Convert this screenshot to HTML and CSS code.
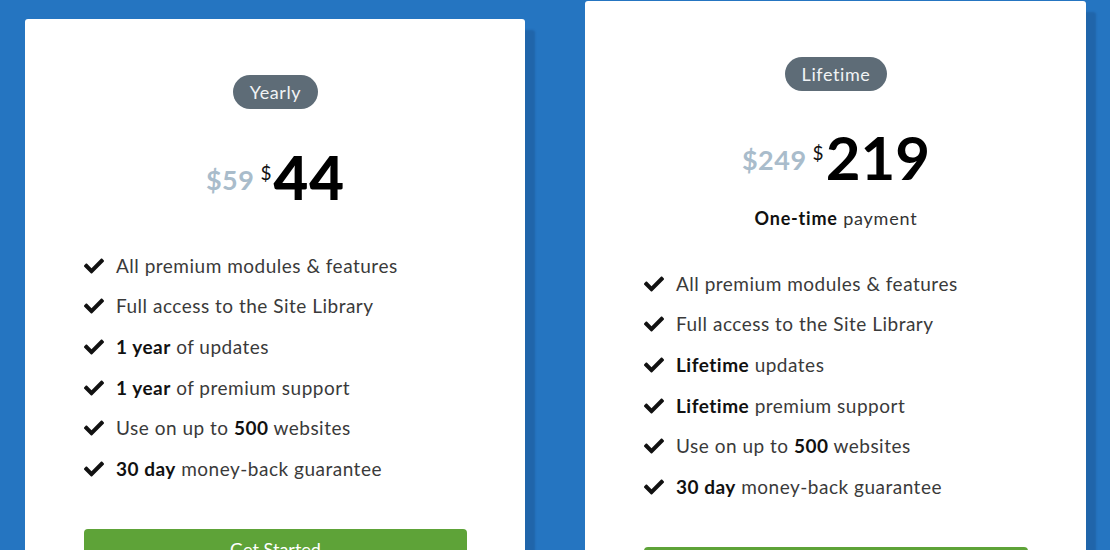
FILE: index.html
```html
<!DOCTYPE html>
<html lang="en">
<head>
<meta charset="utf-8">
<title>Pricing</title>
<link rel="stylesheet" href="styles.css">
</head>
<body>
<main class="plans">
  <section class="card card--yearly">
    <span class="badge">Yearly</span>
    <div class="price">
      <span class="price__old">$59</span>
      <span class="price__cur">$</span>
      <span class="price__num">44</span>
    </div>
    <ul class="features">
      <li><svg class="check" viewBox="0 0 512 512"><path d="M173.898 439.404l-166.4-166.4c-9.997-9.997-9.997-26.206 0-36.204l36.203-36.204c9.997-9.998 26.207-9.998 36.204 0L192 312.69 432.095 72.596c9.997-9.997 26.207-9.997 36.204 0l36.203 36.204c9.997 9.997 9.997 26.206 0 36.204l-294.4 294.401c-9.998 9.997-26.207 9.997-36.204-.001z"/></svg><span>All premium modules &amp; features</span></li>
      <li><svg class="check" viewBox="0 0 512 512"><path d="M173.898 439.404l-166.4-166.4c-9.997-9.997-9.997-26.206 0-36.204l36.203-36.204c9.997-9.998 26.207-9.998 36.204 0L192 312.69 432.095 72.596c9.997-9.997 26.207-9.997 36.204 0l36.203 36.204c9.997 9.997 9.997 26.206 0 36.204l-294.4 294.401c-9.998 9.997-26.207 9.997-36.204-.001z"/></svg><span>Full access to the Site Library</span></li>
      <li><svg class="check" viewBox="0 0 512 512"><path d="M173.898 439.404l-166.4-166.4c-9.997-9.997-9.997-26.206 0-36.204l36.203-36.204c9.997-9.998 26.207-9.998 36.204 0L192 312.69 432.095 72.596c9.997-9.997 26.207-9.997 36.204 0l36.203 36.204c9.997 9.997 9.997 26.206 0 36.204l-294.4 294.401c-9.998 9.997-26.207 9.997-36.204-.001z"/></svg><span><b>1 year</b> of updates</span></li>
      <li><svg class="check" viewBox="0 0 512 512"><path d="M173.898 439.404l-166.4-166.4c-9.997-9.997-9.997-26.206 0-36.204l36.203-36.204c9.997-9.998 26.207-9.998 36.204 0L192 312.69 432.095 72.596c9.997-9.997 26.207-9.997 36.204 0l36.203 36.204c9.997 9.997 9.997 26.206 0 36.204l-294.4 294.401c-9.998 9.997-26.207 9.997-36.204-.001z"/></svg><span><b>1 year</b> of premium support</span></li>
      <li><svg class="check" viewBox="0 0 512 512"><path d="M173.898 439.404l-166.4-166.4c-9.997-9.997-9.997-26.206 0-36.204l36.203-36.204c9.997-9.998 26.207-9.998 36.204 0L192 312.69 432.095 72.596c9.997-9.997 26.207-9.997 36.204 0l36.203 36.204c9.997 9.997 9.997 26.206 0 36.204l-294.4 294.401c-9.998 9.997-26.207 9.997-36.204-.001z"/></svg><span>Use on up to <b>500</b> websites</span></li>
      <li><svg class="check" viewBox="0 0 512 512"><path d="M173.898 439.404l-166.4-166.4c-9.997-9.997-9.997-26.206 0-36.204l36.203-36.204c9.997-9.998 26.207-9.998 36.204 0L192 312.69 432.095 72.596c9.997-9.997 26.207-9.997 36.204 0l36.203 36.204c9.997 9.997 9.997 26.206 0 36.204l-294.4 294.401c-9.998 9.997-26.207 9.997-36.204-.001z"/></svg><span><b>30 day</b> money-back guarantee</span></li>
    </ul>
    <a class="btn" href="#">Get Started</a>
  </section>

  <section class="card card--lifetime">
    <span class="badge">Lifetime</span>
    <div class="price">
      <span class="price__old">$249</span>
      <span class="price__cur">$</span>
      <span class="price__num">219</span>
    </div>
    <p class="payment"><b>One-time</b> payment</p>
    <ul class="features">
      <li><svg class="check" viewBox="0 0 512 512"><path d="M173.898 439.404l-166.4-166.4c-9.997-9.997-9.997-26.206 0-36.204l36.203-36.204c9.997-9.998 26.207-9.998 36.204 0L192 312.69 432.095 72.596c9.997-9.997 26.207-9.997 36.204 0l36.203 36.204c9.997 9.997 9.997 26.206 0 36.204l-294.4 294.401c-9.998 9.997-26.207 9.997-36.204-.001z"/></svg><span>All premium modules &amp; features</span></li>
      <li><svg class="check" viewBox="0 0 512 512"><path d="M173.898 439.404l-166.4-166.4c-9.997-9.997-9.997-26.206 0-36.204l36.203-36.204c9.997-9.998 26.207-9.998 36.204 0L192 312.69 432.095 72.596c9.997-9.997 26.207-9.997 36.204 0l36.203 36.204c9.997 9.997 9.997 26.206 0 36.204l-294.4 294.401c-9.998 9.997-26.207 9.997-36.204-.001z"/></svg><span>Full access to the Site Library</span></li>
      <li><svg class="check" viewBox="0 0 512 512"><path d="M173.898 439.404l-166.4-166.4c-9.997-9.997-9.997-26.206 0-36.204l36.203-36.204c9.997-9.998 26.207-9.998 36.204 0L192 312.69 432.095 72.596c9.997-9.997 26.207-9.997 36.204 0l36.203 36.204c9.997 9.997 9.997 26.206 0 36.204l-294.4 294.401c-9.998 9.997-26.207 9.997-36.204-.001z"/></svg><span><b>Lifetime</b> updates</span></li>
      <li><svg class="check" viewBox="0 0 512 512"><path d="M173.898 439.404l-166.4-166.4c-9.997-9.997-9.997-26.206 0-36.204l36.203-36.204c9.997-9.998 26.207-9.998 36.204 0L192 312.69 432.095 72.596c9.997-9.997 26.207-9.997 36.204 0l36.203 36.204c9.997 9.997 9.997 26.206 0 36.204l-294.4 294.401c-9.998 9.997-26.207 9.997-36.204-.001z"/></svg><span><b>Lifetime</b> premium support</span></li>
      <li><svg class="check" viewBox="0 0 512 512"><path d="M173.898 439.404l-166.4-166.4c-9.997-9.997-9.997-26.206 0-36.204l36.203-36.204c9.997-9.998 26.207-9.998 36.204 0L192 312.69 432.095 72.596c9.997-9.997 26.207-9.997 36.204 0l36.203 36.204c9.997 9.997 9.997 26.206 0 36.204l-294.4 294.401c-9.998 9.997-26.207 9.997-36.204-.001z"/></svg><span>Use on up to <b>500</b> websites</span></li>
      <li><svg class="check" viewBox="0 0 512 512"><path d="M173.898 439.404l-166.4-166.4c-9.997-9.997-9.997-26.206 0-36.204l36.203-36.204c9.997-9.998 26.207-9.998 36.204 0L192 312.69 432.095 72.596c9.997-9.997 26.207-9.997 36.204 0l36.203 36.204c9.997 9.997 9.997 26.206 0 36.204l-294.4 294.401c-9.998 9.997-26.207 9.997-36.204-.001z"/></svg><span><b>30 day</b> money-back guarantee</span></li>
    </ul>
    <a class="btn" href="#">Get Started</a>
  </section>
</main>
</body>
</html>
```

FILE: styles.css
```css
html, body {
  margin: 0;
  padding: 0;
}

body {
  background: #2575c1;
  font-family: Lato, "Open Sans", "Liberation Sans", sans-serif;
  color: #333;
  height: 550px;
  overflow: hidden;
}

.plans {
  display: flex;
  align-items: flex-start;
  gap: 60px;
  padding-left: 25px;
}

.card {
  box-sizing: border-box;
  background: #fff;
  border-radius: 3px;
  box-shadow: 10px 11px 2px rgba(20, 60, 110, 0.28);
  display: flex;
  flex-direction: column;
  align-items: center;
  padding: 56px 58px 120px 59px;
}

.card--yearly {
  width: 500px;
  margin-top: 19px;
}

.card--lifetime {
  width: 501px;
  margin-top: 1px;
}

.badge {
  display: block;
  background: #5e6c77;
  color: #f1f3f5;
  font-size: 18px;
  letter-spacing: 0.6px;
  line-height: 24px;
  padding: 5px 17px;
  border-radius: 17px;
}

.price {
  display: flex;
  align-items: flex-start;
  justify-content: center;
  margin-top: 38px;
  height: 60px;
}

.card--lifetime .price {
  margin-top: 36px;
}

.price__old {
  font-size: 27px;
  line-height: 1;
  font-weight: 700;
  letter-spacing: 0.5px;
  color: #a9bccb;
  margin-top: 19px;
  margin-right: 6px;
}

.price__cur {
  font-size: 19px;
  line-height: 1;
  color: #111;
  margin-top: 16px;
  margin-right: 2px;
}

.price__num {
  font-size: 60px;
  line-height: 1;
  font-weight: 700;
  color: #000;
}

.card--yearly .price__num {
  font-weight: 900;
  letter-spacing: 1px;
}

.payment {
  margin: 19px 0 0;
  font-size: 18px;
  letter-spacing: 0.8px;
  line-height: 24px;
  color: #333;
}

.payment b {
  color: #111;
}

.features {
  list-style: none;
  margin: 38px 0 0;
  padding: 0;
  align-self: stretch;
}

.card--lifetime .features {
  margin-top: 33px;
}

.features li {
  display: flex;
  align-items: center;
  gap: 12px;
  height: 40.6px;
  font-size: 19px;
  letter-spacing: 0.5px;
  color: #3a3a3a;
}

.features b {
  color: #111;
  font-weight: 700;
}

.check {
  width: 20px;
  height: 20px;
  flex: none;
  fill: #111;
  margin-top: 1px;
}

.btn {
  display: block;
  align-self: stretch;
  margin-top: 40px;
  background: #5ea338;
  color: #fff;
  text-decoration: none;
  text-align: center;
  font-size: 18px;
  line-height: 24px;
  padding: 8px 0 10px;
  border-radius: 4px;
}
```
